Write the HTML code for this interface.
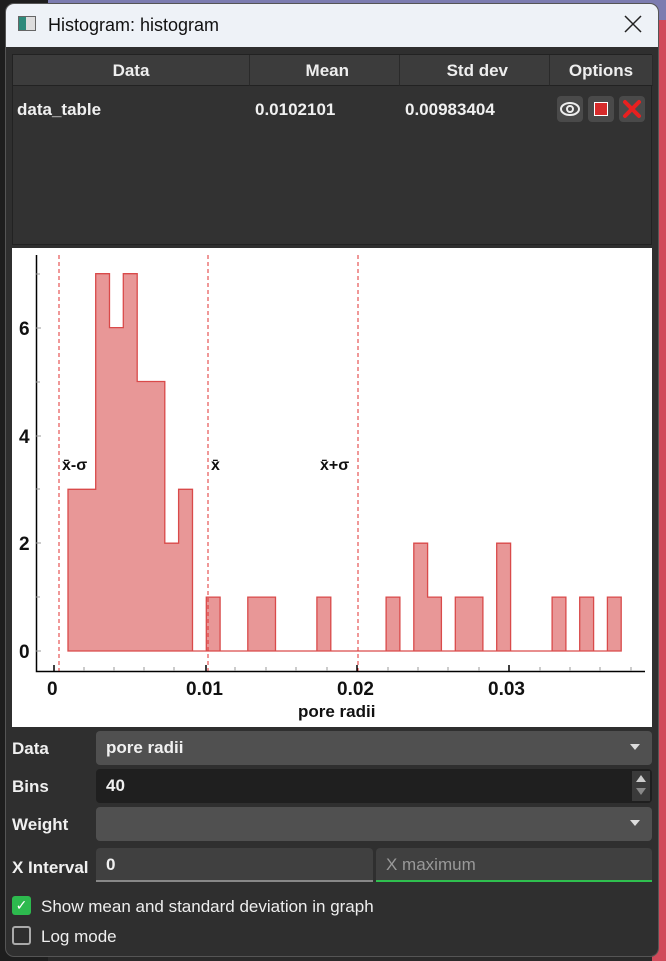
<!DOCTYPE html>
<html><head><style>
*{box-sizing:border-box;margin:0;padding:0}
body{width:666px;height:961px;overflow:hidden;background:#2a2a2a;font-family:"Liberation Sans",sans-serif;position:relative}
.bgtop{position:absolute;left:0;top:0;width:666px;height:20px;background:#7c7cb0}
.bgl{position:absolute;left:0;top:0;width:48px;height:961px;background:#1e1e1e}
.bgr{position:absolute;left:652px;top:20px;width:14px;height:941px;background:#d04a5a}
.win{position:absolute;left:6px;top:4px;width:652px;height:952px;background:#2f2f2f;border-radius:8px;overflow:hidden;box-shadow:0 0 0 1px #555}
.title{position:absolute;left:0;top:0;width:652px;height:43px;background:#eef2f7;color:#111;font-size:18px}
.title span{position:absolute;left:42px;top:11px}
.ic{position:absolute;left:12px;top:12px;width:18px;height:15px;border:1px solid #666;background:linear-gradient(90deg,#2e8a7a 0 45%,#ddd 45%)}
.tbl{position:absolute;left:6px;top:50px;width:640px;height:191px;background:#323232;border:1px solid #222}
.hd{position:absolute;top:0;height:31px;background:#3c3c3c;border-right:1px solid #2a2a2a;border-bottom:1px solid #222;color:#eee;font-weight:bold;font-size:17px;line-height:31px}
.cell{position:absolute;top:45px;color:#f0f0f0;font-size:17px;font-weight:bold}
.btn{position:absolute;top:41px;width:26px;height:26px;background:#4a4a4a;border-radius:4px}
.plot{position:absolute;left:6px;top:244px;width:640px;height:479px;background:#fff}
.lab{position:absolute;left:6px;color:#f0f0f0;font-size:17px;font-weight:bold}
.fld{position:absolute;left:90px;width:556px;height:34px;background:#505050;border-radius:4px;color:#f0f0f0;font-size:17px;font-weight:bold;padding:7px 10px}
.arr{position:absolute;right:12px;top:13px;width:0;height:0;border-left:5px solid transparent;border-right:5px solid transparent;border-top:6px solid #ddd}
</style></head><body>
<div class="bgtop"></div><div class="bgl"></div><div class="bgr"></div>
<div class="win">
<div class="title"><div class="ic"></div><span>Histogram: histogram</span><svg style="position:absolute;left:618px;top:11px" width="18" height="18"><path d="M1 1L17 17M17 1L1 17" stroke="#222" stroke-width="1.5"/></svg></div>
<div class="tbl">
<div class="hd" style="left:0;width:237px;text-align:center">Data</div>
<div class="hd" style="left:237px;width:150px;text-align:right;padding-right:50px">Mean</div>
<div class="hd" style="left:387px;width:150px;text-align:right;padding-right:41px">Std dev</div>
<div class="hd" style="left:537px;width:103px;text-align:center">Options</div>
<div class="cell" style="left:4px">data_table</div>
<div class="cell" style="left:242px">0.0102101</div>
<div class="cell" style="left:392px">0.00983404</div>
<div class="btn" style="left:544px"><svg width="26" height="26"><ellipse cx="13" cy="13" rx="9" ry="6" fill="none" stroke="#eee" stroke-width="2"/><circle cx="13" cy="13" r="3" fill="none" stroke="#eee" stroke-width="2"/></svg></div>
<div class="btn" style="left:575px"><div style="position:absolute;left:6px;top:6px;width:14px;height:14px;background:#d62b2b;border:1px solid #fff"></div></div>
<div class="btn" style="left:606px"><svg width="26" height="26"><path d="M6 6L20 20M20 6L6 20" stroke="#e82020" stroke-width="4" stroke-linecap="round"/></svg></div>
</div>
<div class="plot"><svg width="640" height="479" viewBox="12 248 640 479" font-family="Liberation Sans,sans-serif" font-weight="bold">
<path d="M68 651V489.3H95.7V273.7H109.5V327.6H123.3V273.7H137.2V381.5H164.8V543.2H178.6V489.3H192.5V651H206.3V597.1H220.1V651H247.8V597.1H275.5V651H316.9V597.1H330.8V651H386.1V597.1H399.9V651H413.8V543.2H427.6V597.1H441.4V651H455.3V597.1H482.9V651H496.7V543.2H510.6V651H552.1V597.1H565.9V651H579.7V597.1H593.6V651H607.4V597.1H621.2V651Z" fill="#e89797" stroke="#d94a4a" stroke-width="1.3"/>
<g stroke="#e03030" stroke-dasharray="4,3" stroke-width="1"><path d="M59 255V671M208 255V671M358 255V671"/></g>
<path d="M36.5 255V671.5H645" stroke="#000" stroke-width="1.5" fill="none"/>
<g stroke="#999" stroke-width="1"><path d="M36 651H41M36 597H40M36 543H41M36 489H40M36 436H41M36 382H40M36 328H41M36 274H40"/>
<path d="M84 671V667M114 671V667M144 671V667M174 671V667M235 671V667M266 671V667M296 671V667M327 671V667M388 671V667M418 671V667M448 671V667M479 671V667M540 671V667M570 671V667M600 671V667M631 671V667"/></g>
<path d="M54 671V665M206 671V665M357 671V665M509 671V665" stroke="#000" stroke-width="1.5"/>
<g font-size="19" fill="#111"><text x="19" y="658">0</text><text x="19" y="550">2</text><text x="19" y="443">4</text><text x="19" y="335">6</text>
<text x="47" y="695">0</text><text x="186" y="695">0.01</text><text x="337" y="695">0.02</text><text x="488" y="695">0.03</text>
<text x="298" y="717" font-size="17">pore radii</text></g>
<g font-size="16" fill="#111"><text x="62" y="470">x̄-σ</text><text x="211" y="470">x̄</text><text x="320" y="470">x̄+σ</text></g>
</svg></div>
<div class="lab" style="top:735px">Data</div>
<div class="fld" style="top:727px">pore radii<div class="arr"></div></div>
<div class="lab" style="top:773px">Bins</div>
<div class="fld" style="top:765px;background:#1f1f1f">40<div style="position:absolute;right:2px;top:2px;width:18px;height:30px;background:#3a3a3a"><div style="position:absolute;left:4px;top:4px;border-left:5px solid transparent;border-right:5px solid transparent;border-bottom:7px solid #ccc"></div><div style="position:absolute;left:4px;top:17px;border-left:5px solid transparent;border-right:5px solid transparent;border-top:7px solid #888"></div></div></div>
<div class="lab" style="top:811px">Weight</div>
<div class="fld" style="top:803px"><div class="arr"></div></div>
<div class="lab" style="top:854px">X Interval</div>
<div class="fld" style="top:844px;width:277px;background:#404040;border-bottom:2px solid #888;border-radius:4px 4px 0 0">0</div>
<div class="fld" style="top:844px;left:370px;width:276px;background:#404040;border-bottom:2px solid #2fc04f;border-radius:4px 4px 0 0;color:#999;font-weight:normal">X maximum</div>
<div style="position:absolute;left:6px;top:892px;width:19px;height:19px;background:#2dba4e;border-radius:3px;color:#fff;font-size:14px;text-align:center;line-height:19px">✓</div>
<div class="lab" style="left:35px;top:893px;font-weight:normal;color:#eee">Show mean and standard deviation in graph</div>
<div style="position:absolute;left:6px;top:922px;width:19px;height:19px;border:2px solid #aaa;border-radius:3px"></div>
<div class="lab" style="left:35px;top:923px;font-weight:normal;color:#eee">Log mode</div>
</div>
</body></html>
